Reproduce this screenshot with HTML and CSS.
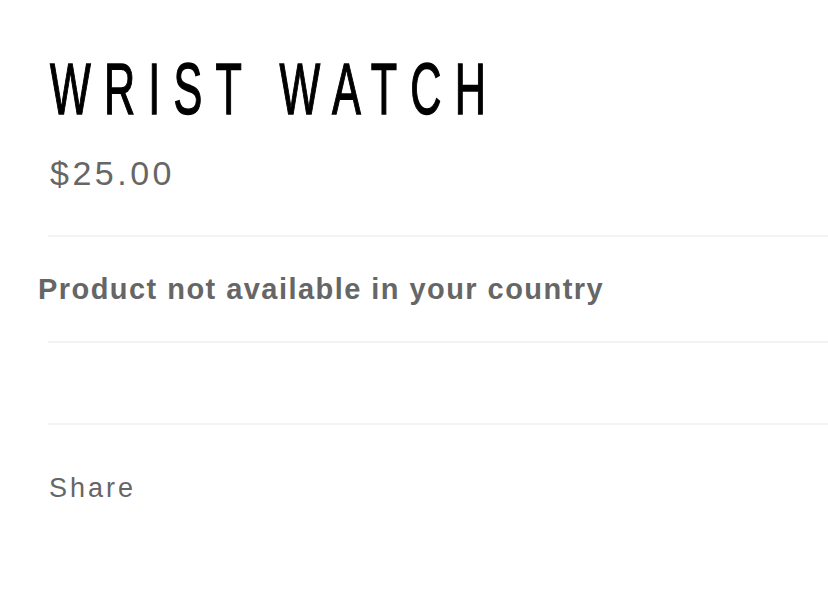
FILE: index.html
```html
<!DOCTYPE html>
<html>
<head>
<meta charset="utf-8">
<link rel="stylesheet" href="styles.css">
</head>
<body>
<div class="product">
  <h1 class="title">WRIST WATCH</h1>
  <div class="price">$25.00</div>
  <div class="row notice">
    <p class="notice-text">Product not available in your country</p>
  </div>
  <div class="row spacer"></div>
  <div class="share">Share</div>
</div>
</body>
</html>
```
FILE: styles.css
```css
html, body {
  margin: 0;
  padding: 0;
  background: #fff;
}
.product {
  padding: 49px 0 0 48px;
  font-family: "Liberation Sans", Arial, sans-serif;
}
.title {
  margin: 0;
  font-family: "Liberation Sans", Arial, sans-serif;
  font-weight: 400;
  font-size: 72px;
  line-height: 80px;
  letter-spacing: 22px;
  color: #000;
  -webkit-text-stroke: 1.4px #000;
  white-space: nowrap;
  transform: scaleX(0.6);
  transform-origin: 2px 0;
  padding-left: 2px;
}
.price {
  margin-top: 24px;
  font-size: 34px;
  line-height: 40px;
  color: #666;
  letter-spacing: 3.5px;
  padding-left: 2px;
  padding-bottom: 42px;
}
.row {
  border-top: 2px solid #f3f3f3;
}
.notice {
  height: 104px;
  display: flex;
  align-items: center;
}
.notice-text {
  margin: 0 0 0 -10px;
  font-weight: 700;
  font-size: 29px;
  letter-spacing: 1.45px;
  color: #666;
}
.spacer {
  height: 80px;
  border-bottom: 2px solid #f3f3f3;
}
.share {
  padding: 48px 0 0 1px;
  font-size: 27px;
  line-height: 30px;
  letter-spacing: 3px;
  color: #666;
}
```
